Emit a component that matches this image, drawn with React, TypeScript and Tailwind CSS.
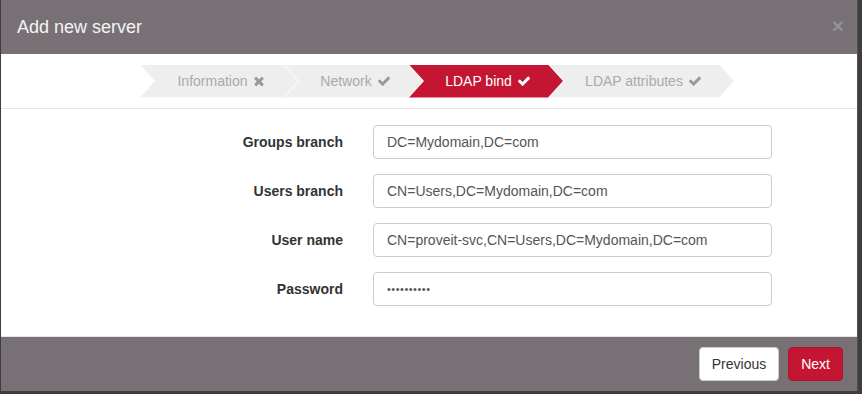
import React from "react";

const Check = ({ className = "" }: { className?: string }) => (
  <svg viewBox="0 0 1792 1792" className={className} width="14" height="14" fill="currentColor">
    <path d="M1671 566q0 40-28 68l-724 724-136 136q-28 28-68 28t-68-28l-136-136-362-362q-28-28-28-68t28-68l136-136q28-28 68-28t68 28l294 295 656-657q28-28 68-28t68 28l136 136q28 28 28 68z" />
  </svg>
);

const Cross = ({ className = "" }: { className?: string }) => (
  <svg viewBox="0 0 1408 1792" className={className} width="12" height="14" fill="currentColor">
    <path d="M1298 1322q0 40-28 68l-136 136q-28 28-68 28t-68-28l-294-294-294 294q-28 28-68 28t-68-28l-136-136q-28-28-28-68t28-68l294-294-294-294q-28-28-28-68t28-68l136-136q28-28 68-28t68 28l294 294 294-294q28-28 68-28t68 28l136 136q28 28 28 68t-28 68l-294 294 294 294q28 28 28 68z" />
  </svg>
);

const clip = {
  clipPath:
    "polygon(0 0, calc(100% - 15px) 0, 100% 50%, calc(100% - 15px) 100%, 0 100%, 15px 50%)",
};

function Step({
  label,
  width,
  active,
  icon,
  first,
}: {
  label: string;
  width: number;
  active?: boolean;
  icon: "check" | "cross";
  first?: boolean;
}) {
  return (
    <div
      className={`h-[33px] flex items-center justify-center gap-[5px] pl-[4px] text-[14px] ${
        active ? "bg-[#c41632] text-white" : "bg-[#eeeeee] text-[#aaaaaa]"
      } ${first ? "" : "-ml-[14px]"}`}
      style={{ ...clip, width }}
    >
      <span>{label}</span>
      {icon === "check" ? (
        <Check className={active ? "text-white" : "text-[#999999]"} />
      ) : (
        <Cross className="text-[#999999]" />
      )}
    </div>
  );
}

function Row({ label, value, password }: { label: string; value: string; password?: boolean }) {
  return (
    <div className="flex items-center h-[34px]">
      <label className="w-[342px] text-right font-bold text-[14px] text-[#333333]">{label}</label>
      <div className="ml-[30px] w-[399px] h-[34px] border border-[#cccccc] rounded-[4px] bg-white flex items-center pl-[13px] pr-[12px] text-[14px] text-[#555555]">
        {password ? (
          <span className="text-[11px] tracking-[0.5px] text-[#555555]">{value}</span>
        ) : (
          value
        )}
      </div>
    </div>
  );
}

export default function App() {
  return (
    <div
      className="w-[862px] h-[394px] bg-[#3f3d40] overflow-hidden"
      style={{ fontFamily: '"Liberation Sans", Arial, sans-serif' }}
    >
      <div className="ml-[1px] w-[857px] h-[391px] flex flex-col border-r border-[#555055]">
        <div className="h-[54px] bg-[#777176] flex items-center justify-between pl-[16px] pr-[13px]">
          <span className="text-[18px] text-[#f4f4f4]">Add new server</span>
          <span className="text-[21px] font-bold text-[#959095] leading-none -mt-[4px]">×</span>
        </div>
        <div className="bg-white flex-1 flex flex-col">
          <div className="h-[55px] border-b border-[#e5e5e5] flex items-center pl-[139px]">
            <Step label="Information" width={158} icon="cross" first />
            <Step label="Network" width={139} icon="check" />
            <Step label="LDAP bind" width={154} icon="check" active />
            <Step label="LDAP attributes" width={185} icon="check" />
          </div>
          <div className="flex flex-col gap-[15px] pt-[16px]">
            <Row label="Groups branch" value="DC=Mydomain,DC=com" />
            <Row label="Users branch" value="CN=Users,DC=Mydomain,DC=com" />
            <Row label="User name" value="CN=proveit-svc,CN=Users,DC=Mydomain,DC=com" />
            <Row label="Password" value="••••••••••" password />
          </div>
        </div>
        <div className="h-[55px] bg-[#777176] border-t border-[#e5e5e5] flex items-center justify-end pr-[14px] gap-[9px]">
          <button className="h-[34px] px-[12px] bg-white border border-[#cccccc] rounded-[4px] text-[14px] text-[#333333]">
            Previous
          </button>
          <button className="h-[34px] px-[12px] bg-[#c41632] border border-[#b3142d] rounded-[4px] text-[14px] text-white">
            Next
          </button>
        </div>
      </div>
    </div>
  );
}
